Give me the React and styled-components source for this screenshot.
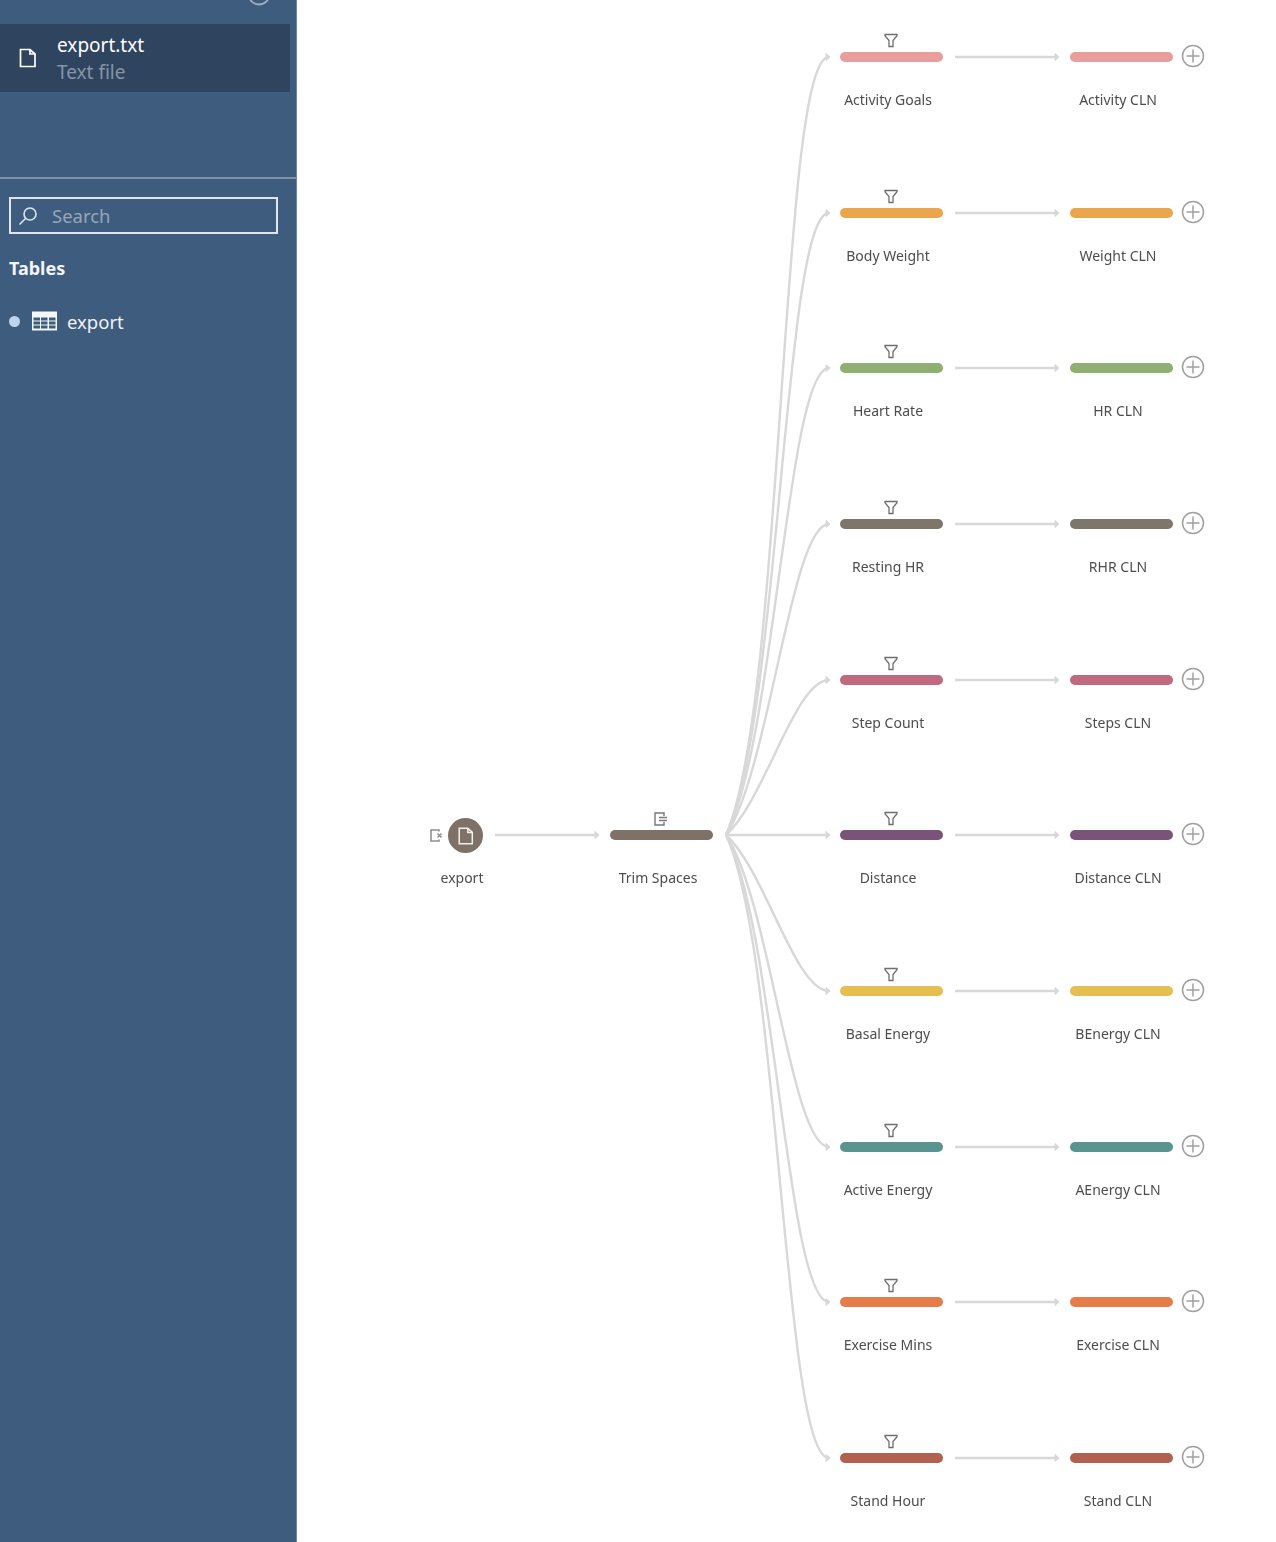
import React from "react";
import styled, { createGlobalStyle } from "styled-components";

const Global = createGlobalStyle`
	html, body {
		margin: 0;
		padding: 0;
		background: #fff;
	}
	body {
		font-family: "Noto Sans", "Open Sans", sans-serif;
	}
`;

const Page = styled.div`
	display: flex;
	width: 1276px;
	height: 1542px;
	overflow: hidden;
	filter: blur(0.4px);
`;

const Sidebar = styled.aside`
	flex: 0 0 297px;
	height: 100%;
	box-sizing: border-box;
	background: #3e5c7e;
	border-right: 1px solid #6d86a1;
	display: flex;
	flex-direction: column;
	position: relative;
`;

const TopIcon = styled.svg`
	position: absolute;
	left: 247px;
	top: -18px;
`;

const SourceRow = styled.div`
	margin-top: 24px;
	width: 290px;
	height: 68px;
	background: #2f445f;
	display: flex;
	align-items: center;
	padding-left: 18px;
	box-sizing: border-box;
	gap: 19px;
`;

const SourceText = styled.div`
	display: flex;
	flex-direction: column;
	gap: 6px;
	padding-top: 2px;
	font-size: 19px;
	line-height: 21px;
`;

const SourceName = styled.span`
	color: #fff;
`;

const SourceType = styled.span`
	color: #8595a8;
`;

const Divider = styled.div`
	margin-top: 85px;
	height: 2px;
	background: #7d92a9;
`;

const SearchBox = styled.div`
	margin: 18px 0 0 9px;
	width: 269px;
	height: 37px;
	box-sizing: border-box;
	border: 2px solid #dfe5ec;
	display: flex;
	align-items: center;
	padding-left: 7px;
	gap: 14px;
	color: #97a6b8;
	font-size: 18.5px;
`;

const SectionTitle = styled.div`
	margin: 22px 0 0 9px;
	color: #f2f5f8;
	font-size: 18px;
	font-weight: 700;
	line-height: 24px;
`;

const TableRow = styled.div`
	margin: 29px 0 0 9px;
	display: flex;
	align-items: center;
	height: 24px;
	color: #f0f3f6;
	font-size: 18.5px;
`;

const Dot = styled.span`
	width: 11px;
	height: 11px;
	border-radius: 50%;
	background: #bcd4ee;
	margin-right: 12px;
`;

const TableIcon = styled.svg`
	margin-right: 10px;
`;

const Canvas = styled.main`
	position: relative;
	flex: 1;
	height: 100%;
`;

const Wires = styled.svg`
	position: absolute;
	left: -297px;
	top: 0;
`;

const Node = styled.div`
	position: absolute;
	left: ${(p) => p.$x - 297}px;
	top: ${(p) => p.$y}px;
	width: 103px;
	height: 10px;
`;

const Bar = styled.div`
	width: 103px;
	height: 10px;
	border-radius: 5px;
	background: ${(p) => p.$color};
`;

const StepIcon = styled.svg`
	position: absolute;
	left: 43px;
	top: -19px;
`;

const Label = styled.div`
	position: absolute;
	left: ${(p) => p.$center - 100}px;
	top: 39px;
	width: 200px;
	text-align: center;
	color: #4d4d4d;
	font-size: 14px;
	line-height: 18px;
	white-space: nowrap;
`;

const AddButton = styled.svg`
	position: absolute;
	left: 111px;
	top: -8px;
`;

const Circle = styled.div`
	position: absolute;
	left: ${448 - 297}px;
	top: 818px;
	width: 35px;
	height: 35px;
	border-radius: 50%;
	background: #7e7268;
	display: flex;
	align-items: center;
	justify-content: center;
`;

const InputIcon = styled.svg`
	position: absolute;
	left: ${429 - 297}px;
	top: 828px;
`;

const CircleLabel = styled.div`
	position: absolute;
	left: ${362 - 297}px;
	top: 869px;
	width: 200px;
	text-align: center;
	color: #4d4d4d;
	font-size: 14px;
	line-height: 18px;
`;

const FileIcon = ({ color = "#fff", size = 20 }) => (
	<svg width={size} height={size} viewBox="0 0 20 20" fill="none" stroke={color} strokeWidth="1.7">
		<path d="M2.5 1.5h9.5l5 4.5v12.5H2.5z" />
		<path d="M12 1.5v4.5h5" />
	</svg>
);

const flows = [
	{ a: "Activity Goals", b: "Activity CLN", c: "#e99d9c" },
	{ a: "Body Weight", b: "Weight CLN", c: "#eba54b" },
	{ a: "Heart Rate", b: "HR CLN", c: "#8fb070" },
	{ a: "Resting HR", b: "RHR CLN", c: "#7e756b" },
	{ a: "Step Count", b: "Steps CLN", c: "#c0697f" },
	{ a: "Distance", b: "Distance CLN", c: "#7a5478" },
	{ a: "Basal Energy", b: "BEnergy CLN", c: "#e7bf50" },
	{ a: "Active Energy", b: "AEnergy CLN", c: "#5a9490" },
	{ a: "Exercise Mins", b: "Exercise CLN", c: "#e57c4a" },
	{ a: "Stand Hour", b: "Stand CLN", c: "#b1614f" },
];

const rowY = (i) => Math.round(57 + i * 155.67);
const HUB = 835;

// control points fitted to the shortest and the longest wire, the rest in between
function curve(y) {
	const d = Math.abs(y - HUB);
	if (d === 0) return `M727 ${HUB}H829`;
	const s = y < HUB ? -1 : 1;
	const k = (d - 155) / 623;
	const c1x = 765 + k * 20;
	const c1y = HUB + s * d * (0.226 - 0.052 * k);
	const c2x = 795 - k * 15;
	return `M726 ${HUB}C${c1x} ${c1y} ${c2x} ${y} 829 ${y}`;
}

const Arrow = ({ x, y }) => <path d={`M${x - 4} ${y - 3.5}L${x} ${y}L${x - 4} ${y + 3.5}z`} fill="#d8d8d8" strokeWidth="1" />;

export default function App() {
	return (
		<Page>
			<Global />
			<Sidebar>
				<TopIcon width="24" height="24" viewBox="0 0 24 24" fill="none" stroke="#9fb0c3" strokeWidth="1.8">
					<circle cx="12" cy="12" r="10.5" />
					<path d="M7 12h10" />
				</TopIcon>
				<SourceRow>
					<FileIcon />
					<SourceText>
						<SourceName>export.txt</SourceName>
						<SourceType>Text file</SourceType>
					</SourceText>
				</SourceRow>
				<Divider />
				<SearchBox>
					<svg width="20" height="20" viewBox="0 0 20 20" fill="none" stroke="#dfe5ec" strokeWidth="1.6">
						<circle cx="12" cy="8" r="6" />
						<path d="M7.5 12.5L1.5 18.5" />
					</svg>
					Search
				</SearchBox>
				<SectionTitle>Tables</SectionTitle>
				<TableRow>
					<Dot />
					<TableIcon width="25" height="20" viewBox="0 0 25 20">
						<rect x="0" y="0.5" width="25" height="19" fill="#f4f6f8" />
						<g fill="#3e5c7e">
							{[6.5, 10.5, 14.5].map((top) =>
								[1.5, 9, 17].map((left) => <rect key={`${top}-${left}`} x={left} y={top} width="6.5" height="3" />)
							)}
						</g>
					</TableIcon>
					export
				</TableRow>
			</Sidebar>
			<Canvas>
				<Wires width="1276" height="1542" fill="none" stroke="#d8d8d8" strokeWidth="2.4">
					<path d={`M495 ${HUB}H598`} />
					<Arrow x={599} y={HUB} />
					{flows.map((f, i) => (
						<g key={f.b}>
							<path d={curve(rowY(i))} />
							<Arrow x={830} y={rowY(i)} />
							<path d={`M955 ${rowY(i)}H1058`} />
							<Arrow x={1059} y={rowY(i)} />
						</g>
					))}
				</Wires>
				<InputIcon width="15" height="15" viewBox="0 0 15 15" fill="none" stroke="#909090" strokeWidth="1.6">
					<path d="M10 3.5V2H2v11h8v-1.5" />
					<path d="M8.5 5.5l4 4M12.5 5.5l-4 4" />
				</InputIcon>
				<Circle>
					<FileIcon size={18} color="#f3f0ec" />
				</Circle>
				<CircleLabel>export</CircleLabel>
				<Node $x={610} $y={830}>
					<Bar $color="#7e7268" />
					<StepIcon width="16" height="16" viewBox="0 0 16 16" fill="none" stroke="#777" strokeWidth="1.4">
						<path d="M11 5V2H2v12h9v-3" />
						<path d="M6 6.5h8M6 9.5h8" />
					</StepIcon>
					<Label $center={48}>Trim Spaces</Label>
				</Node>
				{flows.map((f, i) => (
					<React.Fragment key={f.a}>
						<Node $x={840} $y={rowY(i) - 5}>
							<Bar $color={f.c} />
							<StepIcon width="16" height="15" viewBox="0 0 16 15" fill="none" stroke="#6e6e6e" strokeWidth="1.3">
								<path d="M2 1.5h12v1.2L10 7.5v6H6v-6L2 2.7z" />
							</StepIcon>
							<Label $center={48}>{f.a}</Label>
						</Node>
						<Node $x={1070} $y={rowY(i) - 5}>
							<Bar $color={f.c} />
							<AddButton width="24" height="24" viewBox="0 0 24 24" fill="none" stroke="#a0a0a0" strokeWidth="1.5">
								<circle cx="12" cy="12" r="10.5" />
								<path d="M12 5.5v13M5.5 12h13" />
							</AddButton>
							<Label $center={48}>{f.b}</Label>
						</Node>
					</React.Fragment>
				))}
			</Canvas>
		</Page>
	);
}
